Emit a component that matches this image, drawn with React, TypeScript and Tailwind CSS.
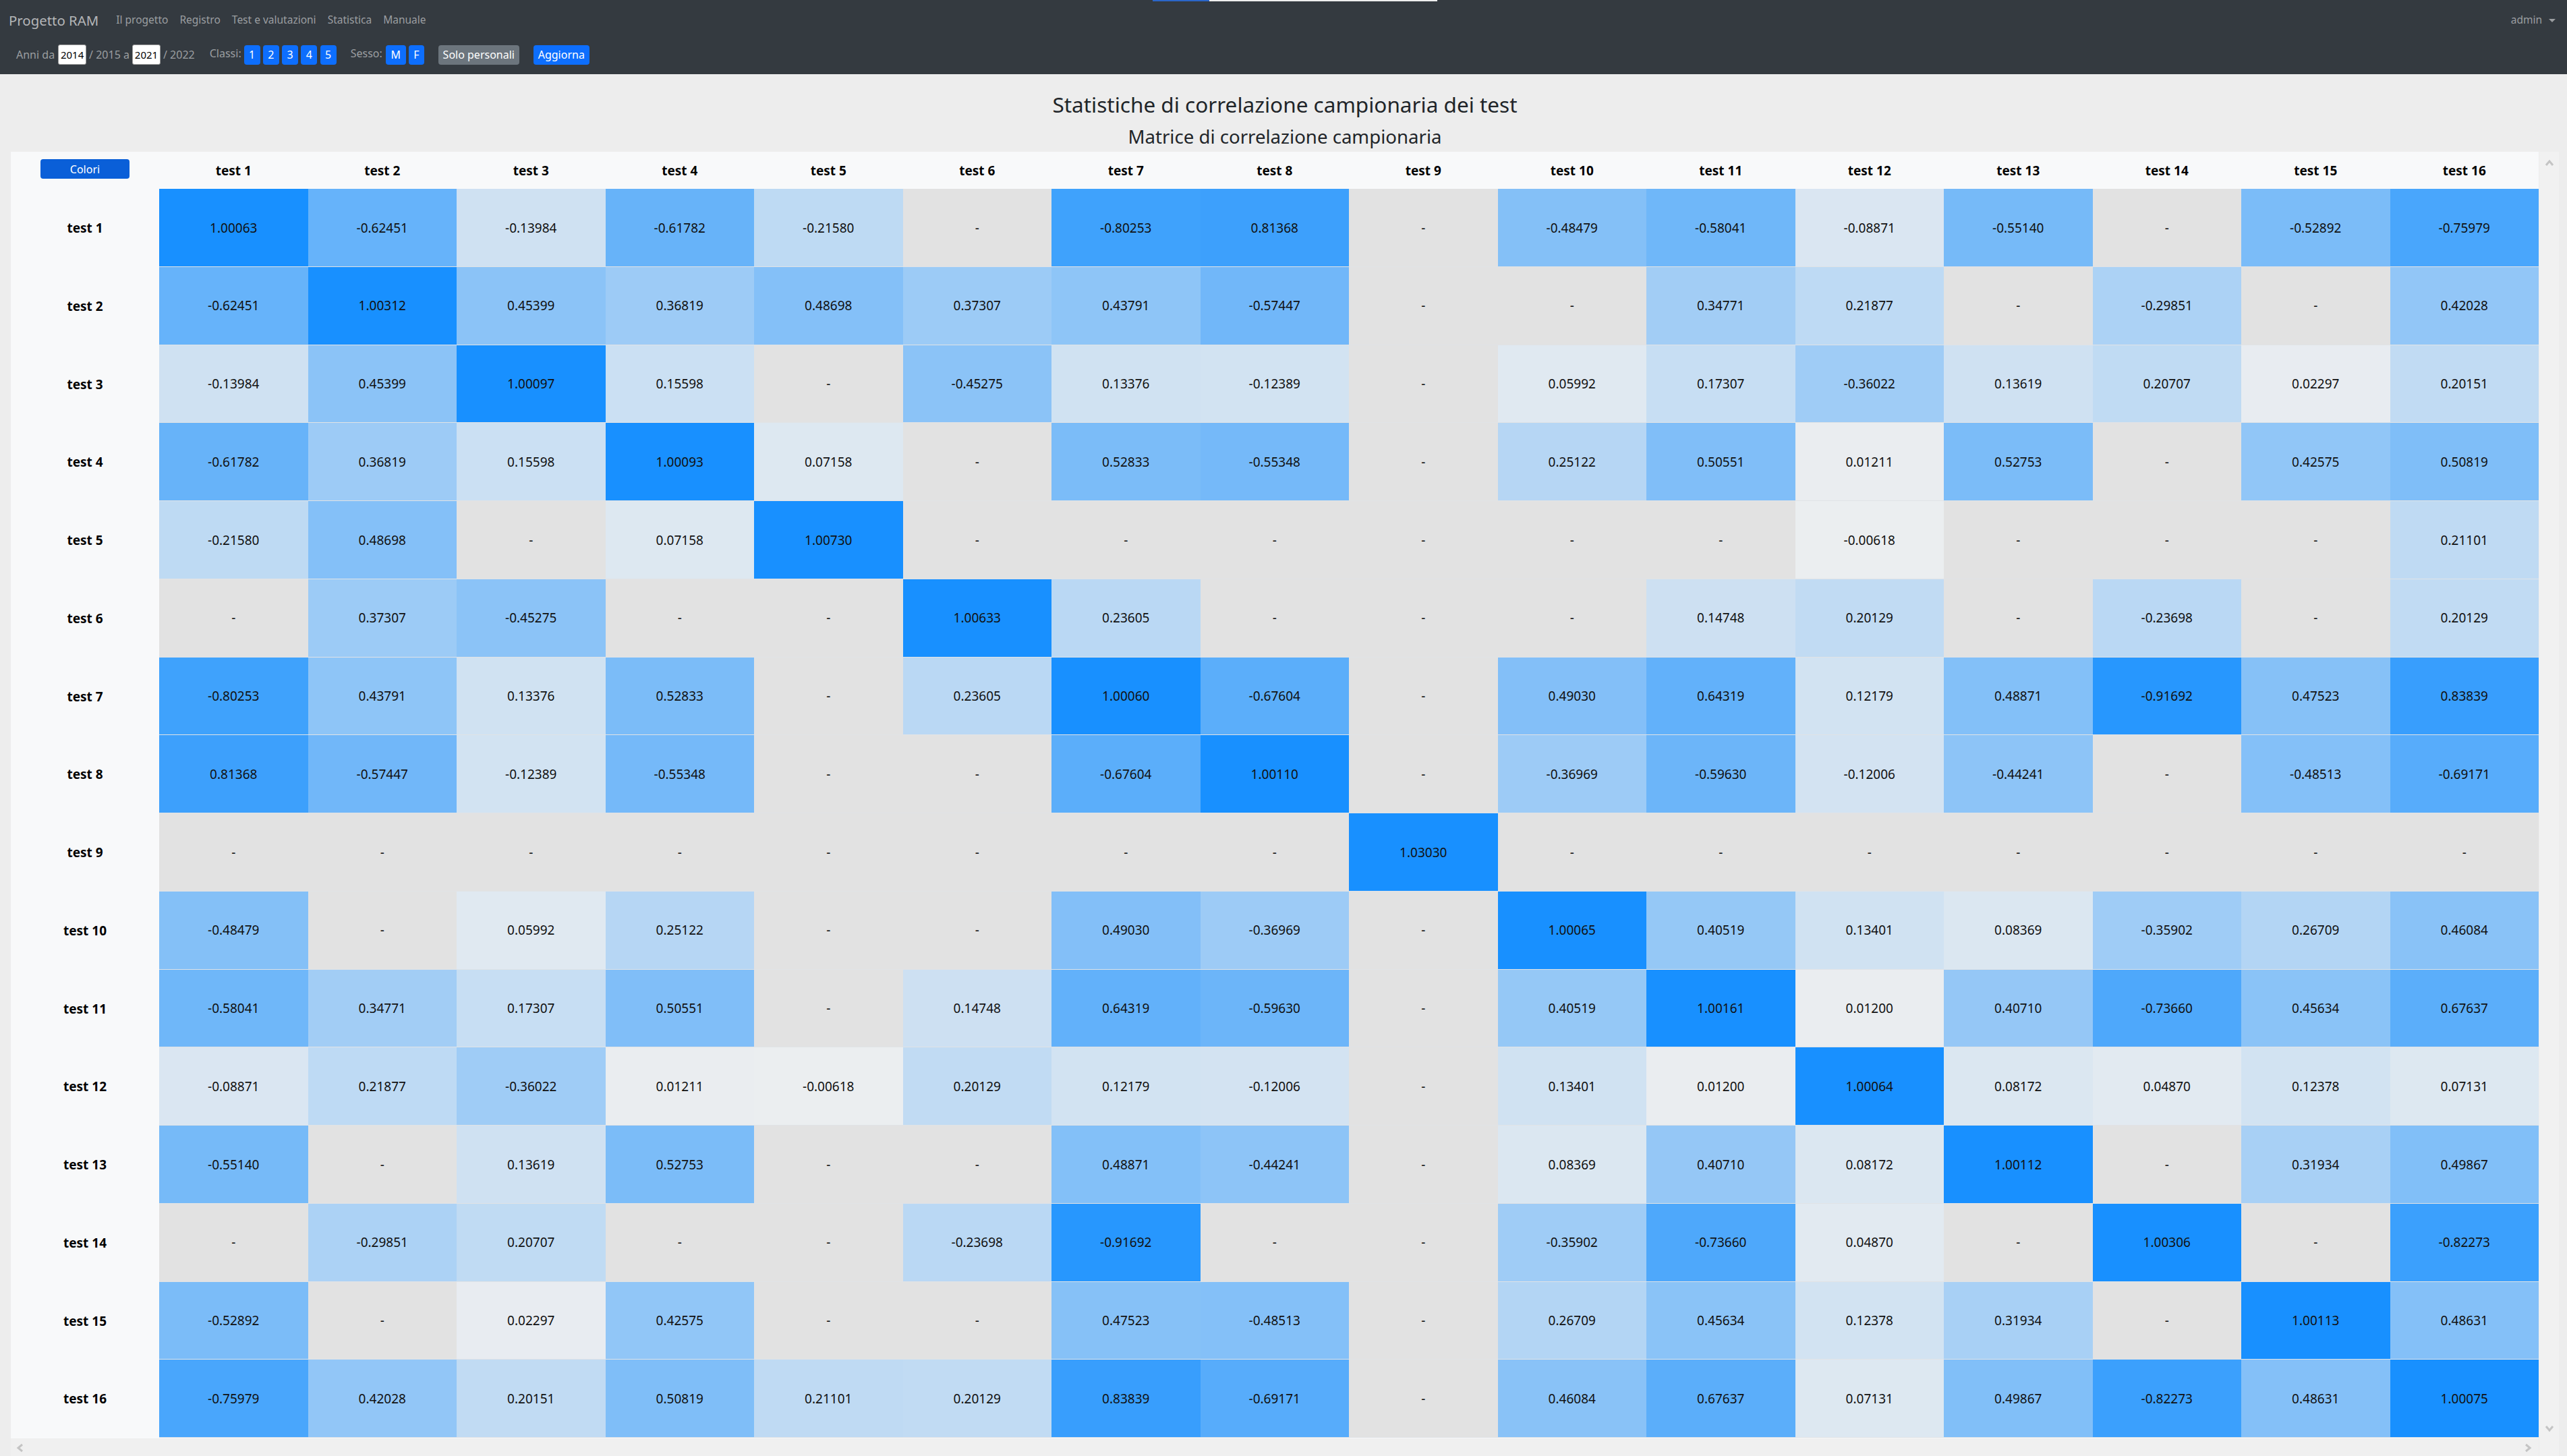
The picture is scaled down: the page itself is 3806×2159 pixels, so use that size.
const labels = Array.from({ length: 16 }, (_, i) => `test ${i + 1}`);

// upper triangle of the matrix, the rest is mirrored
const upper: string[][] = [
  ["1.00063", "-0.62451", "-0.13984", "-0.61782", "-0.21580", "-", "-0.80253", "0.81368", "-", "-0.48479", "-0.58041", "-0.08871", "-0.55140", "-", "-0.52892", "-0.75979"],
  ["1.00312", "0.45399", "0.36819", "0.48698", "0.37307", "0.43791", "-0.57447", "-", "-", "0.34771", "0.21877", "-", "-0.29851", "-", "0.42028"],
  ["1.00097", "0.15598", "-", "-0.45275", "0.13376", "-0.12389", "-", "0.05992", "0.17307", "-0.36022", "0.13619", "0.20707", "0.02297", "0.20151"],
  ["1.00093", "0.07158", "-", "0.52833", "-0.55348", "-", "0.25122", "0.50551", "0.01211", "0.52753", "-", "0.42575", "0.50819"],
  ["1.00730", "-", "-", "-", "-", "-", "-", "-0.00618", "-", "-", "-", "0.21101"],
  ["1.00633", "0.23605", "-", "-", "-", "0.14748", "0.20129", "-", "-0.23698", "-", "0.20129"],
  ["1.00060", "-0.67604", "-", "0.49030", "0.64319", "0.12179", "0.48871", "-0.91692", "0.47523", "0.83839"],
  ["1.00110", "-", "-0.36969", "-0.59630", "-0.12006", "-0.44241", "-", "-0.48513", "-0.69171"],
  ["1.03030", "-", "-", "-", "-", "-", "-", "-"],
  ["1.00065", "0.40519", "0.13401", "0.08369", "-0.35902", "0.26709", "0.46084"],
  ["1.00161", "0.01200", "0.40710", "-0.73660", "0.45634", "0.67637"],
  ["1.00064", "0.08172", "0.04870", "0.12378", "0.07131"],
  ["1.00112", "-", "0.31934", "0.49867"],
  ["1.00306", "-", "-0.82273"],
  ["1.00113", "0.48631"],
  ["1.00075"],
];

const cellAt = (r: number, c: number) => (c >= r ? upper[r][c - r] : upper[c][r - c]);

function cellColor(v: string) {
  if (v === "-") return "#e2e2e2";
  const t = Math.min(1, Math.abs(parseFloat(v)) + 0.015);
  const mix = (a: number, b: number) => Math.round(a + (b - a) * t);
  return `rgb(${mix(240, 24)}, ${mix(240, 144)}, ${mix(240, 255)})`;
}

function Chevron({ points }: { points: string }) {
  return (
    <svg width="14" height="14" viewBox="0 0 14 14" fill="none" stroke="#c4c4c4" strokeWidth="3">
      <polyline points={points} />
    </svg>
  );
}

function SmallBtn({ children, className = "" }: { children: React.ReactNode; className?: string }) {
  return (
    <span className={`h-[29px] flex items-center justify-center rounded-[4px] bg-[#0d6efd] text-white text-[16px] ${className}`}>
      {children}
    </span>
  );
}

function YearInput({ value }: { value: string }) {
  return (
    <span className="w-[42px] h-[30px] flex items-center justify-center rounded-[3px] border border-[#999] bg-white text-black text-[15px]">
      {value}
    </span>
  );
}

export default function App() {
  return (
    <div
      className="relative w-[3806px] h-[2159px] overflow-hidden bg-[#ededed] text-[#212529]"
      style={{ fontFamily: '"Noto Sans", "Open Sans", sans-serif' }}
    >
      {/* page loading bar */}
      <div className="absolute top-0 left-[1709px] flex h-[2px]">
        <div className="w-[84px] bg-[#2a66c8]" />
        <div className="w-[338px] bg-[#eeeeee]" />
      </div>

      <nav className="h-[110px] bg-[#343a40] text-[#9b9ea1] text-[16px]">
        <div className="h-[60px] pl-[13px] pr-[17px] flex items-center">
          <span className="text-[20.4px] text-[#b4b6b8] mr-[26px]">Progetto RAM</span>
          <div className="flex gap-[17px] text-[15.5px]">
            <span>Il progetto</span>
            <span>Registro</span>
            <span>Test e valutazioni</span>
            <span>Statistica</span>
            <span>Manuale</span>
          </div>
          <div className="ml-auto flex items-center gap-[10px] text-[15.5px]">
            <span>admin</span>
            <span className="w-0 h-0 border-x-[5px] border-x-transparent border-t-[5px] border-t-[#9b9ea1]" />
          </div>
        </div>
        <div className="h-[30px] mt-[6px] pl-[24px] flex items-center">
          <span className="mr-[5px]">Anni da</span>
          <YearInput value="2014" />
          <span className="mx-[4px]">/ 2015 a</span>
          <YearInput value="2021" />
          <span className="ml-[4px] mr-[22px]">/ 2022</span>
          <span className="mr-[4px] mb-[5px]">Classi:</span>
          <div className="flex gap-[4.25px] mr-[21px]">
            {["1", "2", "3", "4", "5"].map((n) => (
              <SmallBtn key={n} className="w-[24px]">
                {n}
              </SmallBtn>
            ))}
          </div>
          <span className="mr-[5px] mb-[5px]">Sesso:</span>
          <div className="flex gap-[4px] mr-[21px]">
            <SmallBtn className="w-[30px]">M</SmallBtn>
            <SmallBtn className="w-[23px]">F</SmallBtn>
          </div>
          <SmallBtn className="w-[120px] !bg-[#6c757d] mr-[21px]">Solo personali</SmallBtn>
          <SmallBtn className="w-[83px]">Aggiorna</SmallBtn>
        </div>
      </nav>

      <main className="pl-[16px] pr-[12px]">
        <div className="h-[115px] pt-[22px] text-center">
          <h1 className="text-[31.5px] leading-[46px] text-[#212529]">Statistiche di correlazione campionaria dei test</h1>
          <h2 className="text-[27.6px] leading-[40px] mt-[4px] text-[#212529]">Matrice di correlazione campionaria</h2>
        </div>

        <div className="flex">
          <div className="w-[3748px]">
            <div className="bg-[#f8f9fa] h-[1908px] pb-[1px]">
              <div className="grid grid-cols-[220px_repeat(16,220.5px)] h-[55px] text-black text-[19px] font-bold">
                <div className="flex justify-center pt-[11px]">
                  <span className="w-[132px] h-[29px] flex items-center justify-center rounded-[4px] bg-[#0a5fd8] text-white text-[16px] font-normal">
                    Colori
                  </span>
                </div>
                {labels.map((l) => (
                  <div key={l} className="flex items-center justify-center pt-[1px]">
                    {l}
                  </div>
                ))}
              </div>
              <div className="grid grid-rows-[repeat(16,1fr)] h-[1852px]">
                {labels.map((l, r) => (
                  <div key={l} className="grid grid-cols-[220px_repeat(16,220.5px)]">
                    <div className="flex items-center justify-center pt-[1px] text-black text-[19px] font-bold">{l}</div>
                    {labels.map((_, c) => {
                      const v = cellAt(r, c);
                      return (
                        <div
                          key={c}
                          className="flex items-center justify-center pt-[1px] text-[19px] text-[#111] border-b border-[#e0e3e6]"
                          style={{ backgroundColor: cellColor(v) }}
                        >
                          {v}
                        </div>
                      );
                    })}
                  </div>
                ))}
              </div>
            </div>
            <div className="mt-[1px] h-[25px] bg-[#f0f0f0] flex items-center justify-between pl-[7px] pr-[9px]">
              <Chevron points="10,2 4,7 10,12" />
              <Chevron points="4,2 10,7 4,12" />
            </div>
          </div>
          <div className="ml-[1px] w-[29px] h-[1934px] bg-[#f1f1f1] flex flex-col items-center justify-between pt-[10px] pb-[34px]">
            <Chevron points="2,10 7,4 12,10" />
            <Chevron points="2,4 7,10 12,4" />
          </div>
        </div>
      </main>
    </div>
  );
}
